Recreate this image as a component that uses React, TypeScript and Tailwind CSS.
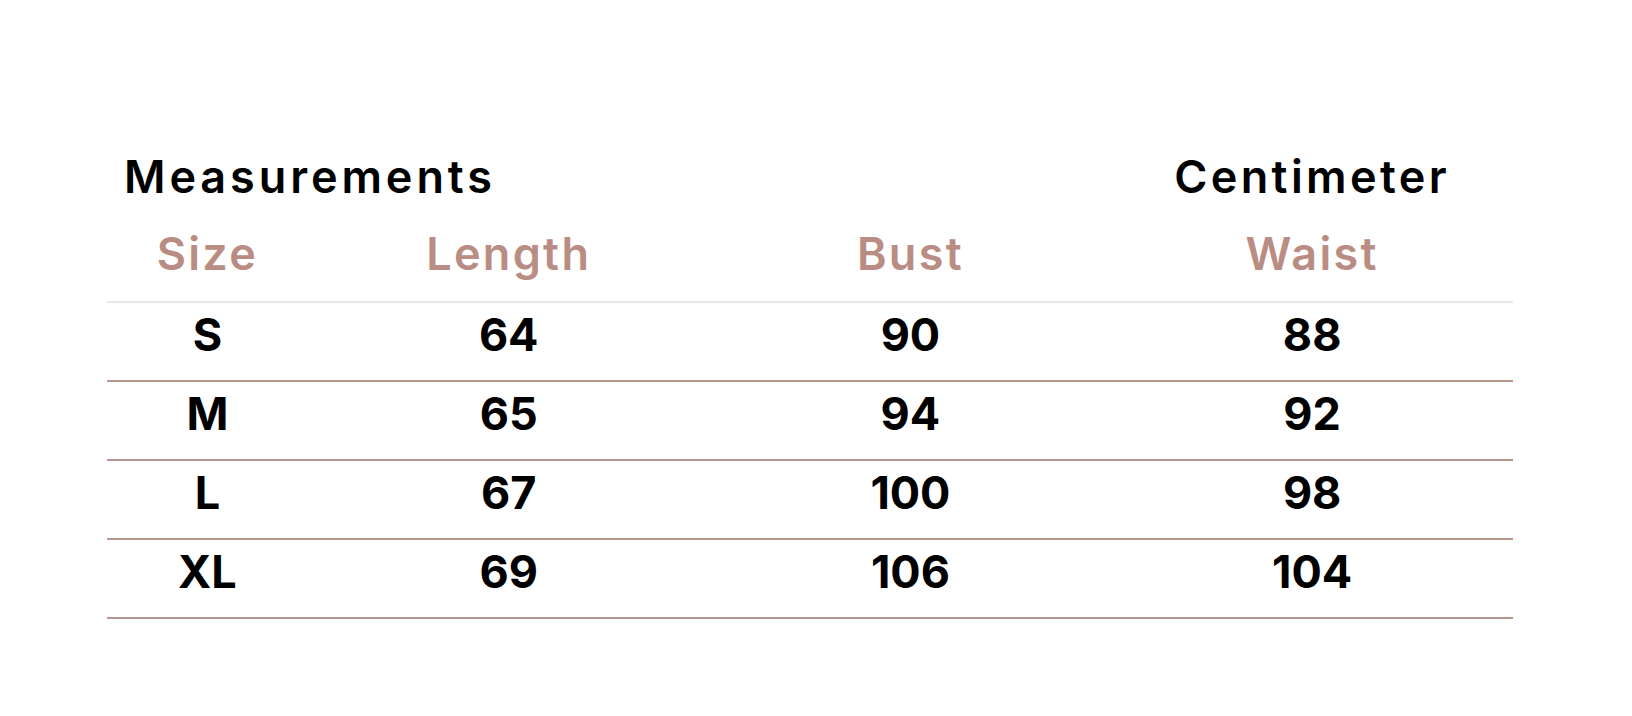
const rows = [
  { size: 'S', length: 64, bust: 90, waist: 88 },
  { size: 'M', length: 65, bust: 94, waist: 92 },
  { size: 'L', length: 67, bust: 100, waist: 98 },
  { size: 'XL', length: 69, bust: 106, waist: 104 },
];

export default function App() {
  return (
    <div
      className="h-[716px] w-[1632px] bg-white pt-[154px] pl-[107px]"
      style={{ fontFamily: 'Inter, "Noto Sans", sans-serif' }}
    >
      <div className="w-[1406px]">
        {/* Title row */}
        <div className="grid h-[45px] grid-cols-[1fr_2fr_2fr_2fr] text-[45px] font-semibold leading-none text-black">
          <div className="col-span-3 pl-[17px] whitespace-nowrap tracking-[3.9px]">Measurements</div>
          <div className="text-center tracking-[3.4px]">Centimeter</div>
        </div>

        {/* Column headings */}
        <div className="mt-[32px] grid h-[72px] grid-cols-[1fr_2fr_2fr_2fr] border-b-2 border-[#e6e6e6] text-center text-[45px] font-semibold leading-none tracking-[2.3px] text-[#b98d83]">
          <div>Size</div>
          <div>Length</div>
          <div>Bust</div>
          <div>Waist</div>
        </div>

        {/* Data */}
        {rows.map((r) => (
          <div
            key={r.size}
            className="grid h-[79px] grid-cols-[1fr_2fr_2fr_2fr] border-b-2 border-[#b7978d] pt-[9px] text-center text-[45px] font-bold leading-none text-black"
          >
            <div>{r.size}</div>
            <div>{r.length}</div>
            <div>{r.bust}</div>
            <div>{r.waist}</div>
          </div>
        ))}
      </div>
    </div>
  );
}
